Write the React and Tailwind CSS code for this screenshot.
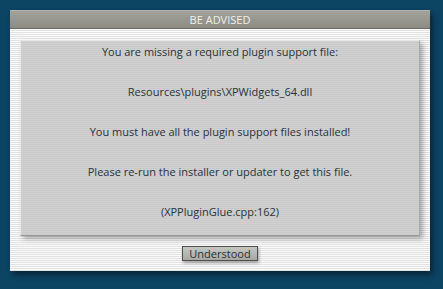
import React from 'react';

const lines = [
    'You are missing a required plugin support file:',
    'Resources\\plugins\\XPWidgets_64.dll',
    'You must have all the plugin support files installed!',
    'Please re-run the installer or updater to get this file.',
    '(XPPluginGlue.cpp:162)',
];

const App = () => {
    return (
        <div className="w-[443px] h-[289px] bg-[#0c4464] p-[10px] font-['Open_Sans',sans-serif]">
            {/* Dialog */}
            <div className="w-[420px] flex flex-col shadow-[3px_4px_6px_rgba(0,0,0,0.45)]">
                {/* Title bar */}
                <div className="h-[19px] bg-[linear-gradient(#a2a29b,#8c8c84)] border-t border-[#b4b4ae] border-b border-b-[#6b6b65] flex items-center justify-center text-[11px] text-[#f0f0ec] leading-none">
                    BE ADVISED
                </div>

                {/* Body */}
                <div className="h-[242px] bg-[repeating-linear-gradient(#fbfbfb_0_1px,#e2e2e2_1px_2px)] px-[10px] pt-[11px] flex flex-col items-center">
                    <div className="w-[400px] h-[196px] bg-[repeating-linear-gradient(#d1d1d1_0_1px,#c9c9c9_1px_2px)] border border-[#e6e6e6] border-r-[#a8a8a8] border-b-[#999] shadow-[3px_3px_5px_rgba(0,0,0,0.3)] flex flex-col items-center gap-[26px] pt-[4px] text-[11px] leading-[14px] text-[#28323a] font-medium">
                        {lines.map((l, i) => (
                            <div key={i} className="h-[14px]">{l}</div>
                        ))}
                    </div>

                    <button className="mt-[10px] w-[76px] h-[15px] bg-[linear-gradient(#c6c6c0,#a9a9a2)] border border-[#4e4e4e] shadow-[1px_2px_3px_rgba(0,0,0,0.35)] text-[11px] leading-none text-[#28323a] font-medium flex items-center justify-center">
                        Understood
                    </button>
                </div>
            </div>
        </div>
    );
};

export default App;
